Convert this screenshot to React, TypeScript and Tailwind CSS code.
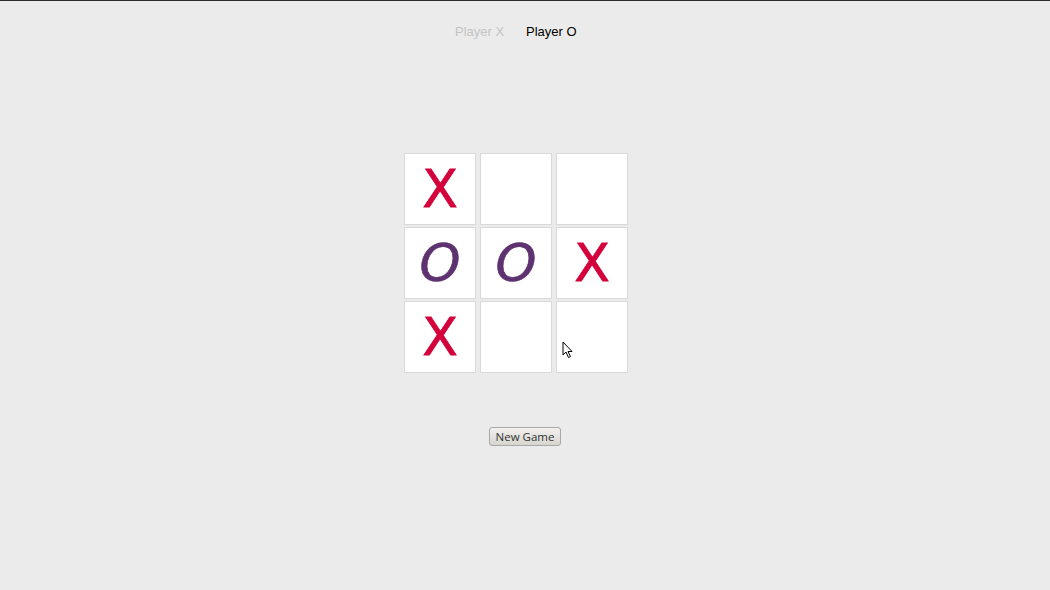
import React from "react";

const board = ["X", "", "", "O", "O", "X", "X", "", ""];

function Cell({ v }: { v: string }) {
  return (
    <div className="w-[72px] h-[72px] bg-white border border-[#d9d9d9] flex items-center justify-center select-none">
      {v === "X" && (
        <span
          className="text-[#d4003b] text-[52px] leading-none"
          style={{ fontFamily: '"DejaVu Sans", sans-serif', WebkitTextStroke: "0.8px #d4003b" }}
        >
          X
        </span>
      )}
      {v === "O" && (
        <span
          className="text-[#5e3270] text-[52px] leading-none italic"
          style={{ fontFamily: '"DejaVu Sans", sans-serif', WebkitTextStroke: "0.6px #5e3270" }}
        >
          O
        </span>
      )}
    </div>
  );
}

export default function App() {
  return (
    <div className="relative w-[1050px] h-[590px] bg-[#ebebeb] border-t border-[#2e2e2e] overflow-hidden" style={{ fontFamily: '"DejaVu Sans", sans-serif' }}>
      <div className="flex flex-col items-center pr-[18px]">
        <div className="mt-[23px] flex gap-[23px] text-[13px] leading-[16px] ml-[-2px]" style={{ fontFamily: '"Liberation Sans", sans-serif' }}>
          <span className="text-[#c4c4c4] w-[48px] whitespace-nowrap">Player X</span>
          <span className="text-black w-[49px] whitespace-nowrap">Player O</span>
        </div>
        <div className="mt-[113px] grid grid-cols-[72px_72px_72px] gap-x-[4px] gap-y-[2px]">
          {board.map((v, i) => (
            <Cell key={i} v={v} />
          ))}
        </div>
      </div>
      <div className="flex justify-center mt-[54px]">
        <button
          className="w-[72px] h-[19px] rounded-[3px] border border-[#a8a8a8] bg-gradient-to-b from-[#f2f1ef] to-[#d8d5d0] text-[#333] text-[11.5px] leading-none flex items-center justify-center"
          style={{ fontFamily: '"Open Sans", "DejaVu Sans", sans-serif' }}
        >
          New Game
        </button>
      </div>
      <svg className="absolute left-[562px] top-[340px]" width="12" height="18" viewBox="0 0 12 18">
        <path d="M1 1 L1 14 L4 11 L6.5 16.5 L8.5 15.5 L6 10.5 L10 10.5 Z" fill="white" stroke="black" strokeWidth="1" strokeLinejoin="round" />
      </svg>
    </div>
  );
}
